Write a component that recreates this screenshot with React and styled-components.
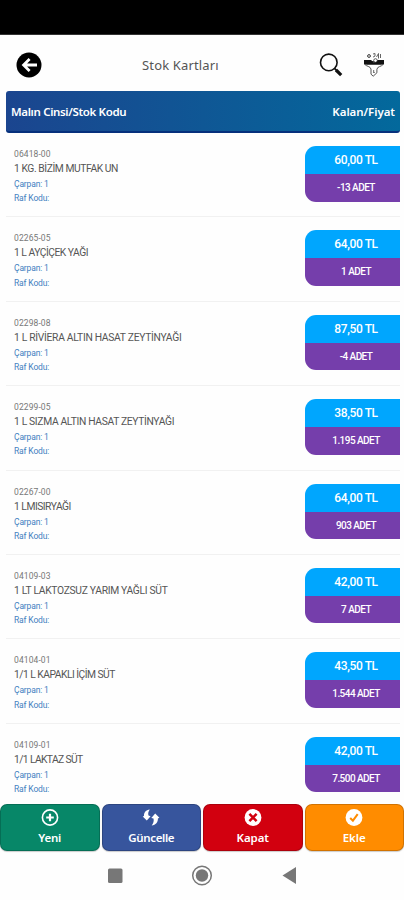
import { styled, createGlobalStyle } from "styled-components"

const GlobalStyle = createGlobalStyle`
    * {
        box-sizing: border-box;
    }
    body {
        margin: 0;
        background-color: #fff;
        font-family: Roboto, "Noto Sans", sans-serif;
    }
`

const Screen = styled.div`
    display: flex;
    flex-direction: column;
    width: 404px;
    height: 900px;
    overflow: hidden;
    background-color: #fefefe;
`

const StatusBar = styled.div`
    flex: none;
    height: 35px;
    background-color: #000;
    border-bottom: solid 1px #333;
`

const TopBar = styled.header`
    flex: none;
    display: flex;
    align-items: center;
    height: 56px;
    padding: 4px 19px 0 16px;

    .title{
        flex: 1;
        margin: 0;
        padding-left: 100px;
        font-family: "Noto Sans", sans-serif;
        font-size: 13px;
        font-weight: 400;
        letter-spacing: 0.15px;
        color: #555;
    }
    .actions{
        display: flex;
        align-items: center;
        gap: 20px;
    }
    svg{
        display: block;
    }
`

const ListHead = styled.div`
    flex: none;
    display: flex;
    align-items: center;
    justify-content: space-between;
    height: 42px;
    margin: 0 4px 0 6px;
    padding: 0 5px;
    border-radius: 3px;
    border-bottom: solid 2px #06307c;
    background: linear-gradient(90deg, #1b458f, #0f5795 50%, #03699c);
    color: #fff;
    font-family: "Noto Sans", sans-serif;
    font-size: 11.5px;
    font-weight: 600;
`

const HeadText = styled.span`
    letter-spacing: ${(props) => props.$spacing}px;
`

const List = styled.div`
    flex: none;
    height: 671px;
    overflow: hidden;
    margin: 0 4px 0 6px;
`

const Row = styled.div`
    display: flex;
    justify-content: space-between;
    align-items: flex-start;
    height: 84.4px;
    padding: 13px 0 0 8px;
    border-bottom: solid 1px #f1f1f1;
`

const Info = styled.div`
    display: flex;
    flex-direction: column;
    white-space: nowrap;

    .code{
        height: 15px;
        line-height: 17px;
        font-size: 8.5px;
        letter-spacing: 0.1px;
        color: #777;
    }
    .detail{
        height: 14.3px;
        line-height: 16px;
        font-size: 8.5px;
        letter-spacing: -0.15px;
        color: #4380c0;
    }
`

const Name = styled.div`
    height: 15px;
    line-height: 16px;
    font-size: 10.3px;
    letter-spacing: ${(props) => props.$spacing}px;
    color: #555;
`

const Badge = styled.div`
    display: flex;
    flex-direction: column;
    width: 95px;
    height: 55.5px;
    overflow: hidden;
    border-radius: 11px 0 0 11px;
    color: #fff;
    text-align: center;

    .price{
        height: 28px;
        padding-left: 7px;
        line-height: 29px;
        background-color: #00a6fe;
        font-size: 12px;
        font-weight: 500;
        letter-spacing: -0.4px;
    }
    .stock{
        height: 28px;
        padding-left: 7px;
        line-height: 28px;
        background-color: #753eab;
        font-size: 10px;
        font-weight: 500;
        letter-spacing: -0.55px;
    }
`

const Buttons = styled.div`
    flex: none;
    display: grid;
    grid-template-columns: repeat(4, 1fr);
    gap: 2px;
    height: 48px;
`

const Button = styled.button`
    display: flex;
    flex-direction: column;
    align-items: center;
    height: 47px;
    padding: 4px 0 0;
    border: solid 1px #0000002e;
    border-radius: 7px;
    box-shadow: 0 1px 1px #00000033;
    background-color: ${(props) => props.$color};
    color: #fff;
    font-family: "Noto Sans", sans-serif;
    font-size: 11.5px;
    font-weight: 600;
    line-height: 16px;
    letter-spacing: ${(props) => props.$spacing || 0}px;

    svg{
        display: block;
        margin-bottom: 4px;
    }
`

const NavBar = styled.nav`
    flex: none;
    display: flex;
    justify-content: center;
    padding-top: 13px;
`

const stoklar = [
    { code: "06418-00", name: "1 KG. BİZİM MUTFAK UN", spacing: -0.43, price: "60,00 TL", stock: "-13 ADET" },
    { code: "02265-05", name: "1 L AYÇİÇEK YAĞI", spacing: -0.5, price: "64,00 TL", stock: "1 ADET" },
    { code: "02298-08", name: "1 L RİVİERA ALTIN HASAT ZEYTİNYAĞI", spacing: -0.3, price: "87,50 TL", stock: "-4 ADET" },
    { code: "02299-05", name: "1 L SIZMA ALTIN HASAT ZEYTİNYAĞI", spacing: -0.34, price: "38,50 TL", stock: "1.195 ADET" },
    { code: "02267-00", name: "1 LMISIRYAĞI", spacing: -0.5, price: "64,00 TL", stock: "903 ADET" },
    { code: "04109-03", name: "1 LT LAKTOZSUZ YARIM YAĞLI SÜT", spacing: -0.31, price: "42,00 TL", stock: "7 ADET" },
    { code: "04104-01", name: "1/1 L KAPAKLI İÇİM SÜT", spacing: -0.52, price: "43,50 TL", stock: "1.544 ADET" },
    { code: "04109-01", name: "1/1 LAKTAZ SÜT", spacing: -0.62, price: "42,00 TL", stock: "7.500 ADET" },
]

function BackIcon() {
    return <svg width="26" height="26" viewBox="0 0 26 26" fill="none">
        <circle cx="13" cy="13" r="12.5" fill="#000" />
        <path d="M13.600 7L7.600 13l6 6M8 13h13" stroke="#fff" strokeWidth="2.800" />
    </svg>
}

function SearchIcon() {
    return <svg width="24" height="24" viewBox="0 0 24 24" fill="none" stroke="#111">
        <circle cx="9.800" cy="9.400" r="8.300" strokeWidth="1.600" />
        <path d="M15.500 15.400l2 2" strokeWidth="1.800" />
        <path d="M17 17l5.200 5.200" strokeWidth="3.200" />
    </svg>
}

function FilterIcon() {
    return <svg width="22" height="26" viewBox="0 0 22 26" fill="none" stroke="#222">
        <path d="M1.500 9.500h19v2.600c-2.500 3-6 2-6.600 5.200v3.500l-3.700 3.400-2.200-2V17c-.8-3-4.500-2.300-6.500-4.900z" fill="#fff" stroke="#555" strokeWidth="1" />
        <path d="M1 8h7l3 2.400L14 8h7v4.200l-3 .6H4l-3-.6z" fill="#111" stroke="none" />
        <circle cx="6" cy="4" r="1.400" strokeWidth=".9" />
        <circle cx="12.500" cy="8.500" r="1.800" fill="#fff" strokeWidth=".7" />
        <path d="M10 2l2-.5v2.600l-2 1M15.500 1.500v5M13.500 5l2-3.500M17.500 2v4M10.700 18v3l1-1" stroke="#555" strokeWidth=".9" />
    </svg>
}

function PlusIcon() {
    return <svg width="18" height="17" viewBox="0 0 18 17" fill="none" stroke="#fff">
        <circle cx="9" cy="8.500" r="7.600" strokeWidth="1.600" />
        <path d="M9 4.700v7.600M5.200 8.500h7.600" strokeWidth="2.200" />
    </svg>
}

function RefreshIcon() {
    return <svg width="18" height="17" viewBox="0 0 18 17" fill="#fff">
        <path d="M7.800 .4C4 .8 1.800 3.400 2 7L.7 7.400l4.100 4.100L8.600 7.200 6.500 6.600C5.800 4.400 6.400 2.200 7.800 .4z" />
        <path d="M13.200 4.600L9.300 8.900l2.200 .7c.6 2.400 0 4.800-1.800 6.900 4-.6 6.400-3.400 6.200-7.100l1.500-.6z" />
    </svg>
}

function CloseIcon() {
    return <svg width="18" height="17" viewBox="0 0 18 17" fill="none">
        <circle cx="9" cy="8.500" r="8.400" fill="#fff" />
        <path d="M5.400 4.900l7.200 7.200M12.600 4.900l-7.200 7.200" stroke="#d2000f" strokeWidth="2.500" />
    </svg>
}

function CheckIcon() {
    return <svg width="18" height="17" viewBox="0 0 18 17" fill="none">
        <circle cx="9" cy="8.500" r="8.400" fill="#fff" />
        <path d="M5.200 9l2.700 2.700 4.800-6.500" stroke="#ff8c00" strokeWidth="2" />
    </svg>
}

export default function App() {
    return <>
        <GlobalStyle />
        <Screen>
            <StatusBar />
            <TopBar>
                <BackIcon />
                <h1 className="title">Stok Kartları</h1>
                <div className="actions">
                    <SearchIcon />
                    <FilterIcon />
                </div>
            </TopBar>

            <ListHead>
                <HeadText $spacing={-0.35}>Malın Cinsi/Stok Kodu</HeadText>
                <HeadText $spacing={-0.05}>Kalan/Fiyat</HeadText>
            </ListHead>

            <List>
                {stoklar.map((item) => (
                    <Row key={item.code}>
                        <Info>
                            <div className="code">{item.code}</div>
                            <Name $spacing={item.spacing}>{item.name}</Name>
                            <div className="detail">Çarpan: 1</div>
                            <div className="detail">Raf Kodu:</div>
                        </Info>
                        <Badge>
                            <div className="price">{item.price}</div>
                            <div className="stock">{item.stock}</div>
                        </Badge>
                    </Row>
                ))}
            </List>

            <Buttons>
                <Button $color="#078768" $spacing={-0.2}><PlusIcon />Yeni</Button>
                <Button $color="#37559d" $spacing={-0.35}><RefreshIcon />Güncelle</Button>
                <Button $color="#d2000f" $spacing={-0.1}><CloseIcon />Kapat</Button>
                <Button $color="#ff8c00"><CheckIcon />Ekle</Button>
            </Buttons>

            <NavBar>
                <svg width="190" height="22" viewBox="0 0 190 22" fill="#777">
                    <rect x="1" y="3.500" width="14.500" height="14.500" rx="1.500" />
                    <circle cx="95" cy="10.500" r="9.300" fill="none" stroke="#777" strokeWidth="1.500" />
                    <circle cx="95" cy="10.500" r="6.200" />
                    <path d="M189 2v17l-13.500-8.500z" />
                </svg>
            </NavBar>
        </Screen>
    </>
}
